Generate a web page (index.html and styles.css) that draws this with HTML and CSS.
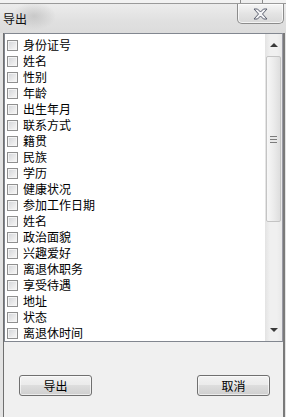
FILE: index.html
```html
<!DOCTYPE html>
<html lang="zh-CN">
<head>
    <meta charset="UTF-8">
    <title>导出</title>
    <link rel="stylesheet" href="styles.css">
</head>
<body>
    <div class="behind"></div>
    <div class="titlebar">
        <span class="title">导出</span>
        <div class="close">
            <svg width="17" height="12" viewBox="0 0 17 12">
                <path d="M2 1 L5.5 1 L8.5 4 L11.5 1 L15 1 L10.5 6 L15 11 L11.5 11 L8.5 8 L5.5 11 L2 11 L6.5 6 Z" fill="#f4f4f6" stroke="#5a5f6e" stroke-width="1" stroke-linejoin="round"/>
            </svg>
        </div>
    </div>
    <div class="client">
        <div class="listbox">
            <ul class="items">
                <li><span class="check"></span>身份证号</li>
                <li><span class="check"></span>姓名</li>
                <li><span class="check"></span>性别</li>
                <li><span class="check"></span>年龄</li>
                <li><span class="check"></span>出生年月</li>
                <li><span class="check"></span>联系方式</li>
                <li><span class="check"></span>籍贯</li>
                <li><span class="check"></span>民族</li>
                <li><span class="check"></span>学历</li>
                <li><span class="check"></span>健康状况</li>
                <li><span class="check"></span>参加工作日期</li>
                <li><span class="check"></span>姓名</li>
                <li><span class="check"></span>政治面貌</li>
                <li><span class="check"></span>兴趣爱好</li>
                <li><span class="check"></span>离退休职务</li>
                <li><span class="check"></span>享受待遇</li>
                <li><span class="check"></span>地址</li>
                <li><span class="check"></span>状态</li>
                <li><span class="check"></span>离退休时间</li>
            </ul>
            <div class="scrollbar">
                <div class="arrow-btn"><span class="tri-up"></span></div>
                <div class="track">
                    <div class="thumb"><span class="grip"></span></div>
                </div>
                <div class="arrow-btn"><span class="tri-down"></span></div>
            </div>
        </div>
        <div class="actions">
            <button>导出</button>
            <button>取消</button>
        </div>
    </div>
</body>
</html>
```

FILE: styles.css
```css
html, body {
    margin: 0;
    padding: 0;
}
body {
    width: 286px;
    height: 417px;
    overflow: hidden;
    background: #e3e3e3;
    font-family: "Noto Sans CJK SC", "DejaVu Sans", sans-serif;
    font-size: 12px;
    color: #000;
}
.behind {
    height: 3px;
    background: linear-gradient(to right, #f2f2f2 240px, #8a8a8a 240px, #8a8a8a 241px, #eeeeee 241px, #eeeeee 262px, #8a8a8a 262px, #8a8a8a 263px, #f2f2f2 263px);
    border-bottom: 1px solid #9a9a9a;
}
.titlebar {
    height: 29px;
    display: flex;
    justify-content: space-between;
    align-items: flex-start;
    background:
        radial-gradient(ellipse 22px 14px at 34px 12px, rgba(150, 150, 150, 0.35), rgba(150, 150, 150, 0)),
        linear-gradient(to bottom, #ececec, #e0e0e0 60%, #dcdcdc);
}
.title {
    padding: 9px 0 0 3px;
    line-height: 12px;
    color: #111;
}
.close {
    width: 45px;
    height: 19px;
    margin-right: 2px;
    border: 1px solid #8c8c8c;
    border-top: none;
    border-radius: 0 0 5px 5px;
    background: linear-gradient(to bottom, #f6f6f6, #e4e4e4 50%, #d8d8d8);
    display: flex;
    justify-content: center;
    align-items: center;
    box-shadow: inset 0 0 0 1px rgba(255, 255, 255, 0.7);
}
.client {
    margin: 0 1px 0 3px;
    height: 384px;
    background: #f0f0f0;
    border-left: 1px solid #6f6f6f;
    border-right: 2px solid #7a7a7a;
}
.listbox {
    height: 307px;
    display: flex;
    background: #fff;
    border: 1px solid #828790;
    border-right: 1px solid #9a9aa4;
}
.items {
    flex: 1;
    list-style: none;
    margin: 0;
    padding: 3px 0 0 2px;
    overflow: hidden;
}
.items li {
    height: 16px;
    line-height: 16px;
    display: flex;
    align-items: center;
    white-space: nowrap;
}
.check {
    width: 9px;
    height: 9px;
    margin-right: 5px;
    border: 1px solid #8f8f8f;
    background: linear-gradient(135deg, #d2d4d8, #eeeeee 70%, #f8f8f8);
    box-shadow: inset 0 0 0 1px #f4f4f4;
}
.scrollbar {
    width: 17px;
    display: flex;
    flex-direction: column;
    background: linear-gradient(to right, #e3e3e3, #f0f0f0 30%, #f0f0f0 70%, #e8e8e8);
}
.arrow-btn {
    height: 22px;
    display: flex;
    justify-content: center;
    align-items: center;
}
.tri-up {
    width: 0;
    height: 0;
    border-left: 4px solid transparent;
    border-right: 4px solid transparent;
    border-bottom: 4px solid #3a3a3a;
}
.tri-down {
    width: 0;
    height: 0;
    border-left: 4px solid transparent;
    border-right: 4px solid transparent;
    border-top: 4px solid #3a3a3a;
}
.track {
    flex: 1;
    padding: 0 1px;
}
.thumb {
    height: 164px;
    border: 1px solid #c4c4c4;
    border-radius: 2px;
    background: linear-gradient(to right, #f7f7f7, #ececec 50%, #dedede);
    display: flex;
    justify-content: center;
    align-items: center;
}
.grip {
    width: 7px;
    height: 7px;
    background: repeating-linear-gradient(to bottom, #7c7c7c 0, #7c7c7c 1px, #e8e8e8 1px, #e8e8e8 3px);
}
.actions {
    display: flex;
    justify-content: space-between;
    padding: 33px 13px 0 15px;
}
button {
    width: 73px;
    height: 21px;
    padding: 0;
    font-family: "Noto Sans CJK SC", "DejaVu Sans", sans-serif;
    font-size: 12px;
    line-height: 19px;
    color: #000;
    border: 1px solid #707070;
    border-radius: 3px;
    background: linear-gradient(to bottom, #f2f2f2, #ebebeb 45%, #dddddd 50%, #cfcfcf);
    box-shadow: inset 0 0 0 1px rgba(255, 255, 255, 0.6);
}
```
